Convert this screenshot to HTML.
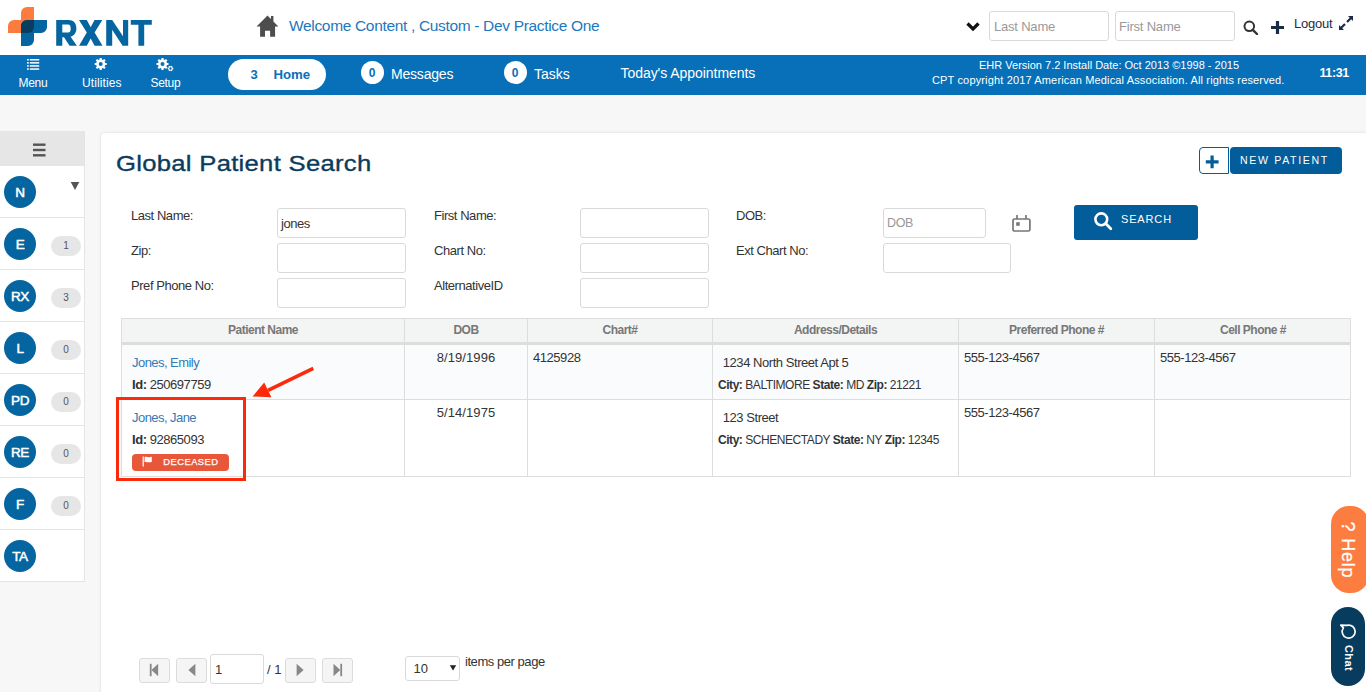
<!DOCTYPE html>
<html><head><meta charset="utf-8">
<style>
*{box-sizing:border-box;margin:0;padding:0}
html,body{width:1366px;height:692px;overflow:hidden;background:#f7f7f7;font-family:"Liberation Sans",sans-serif;color:#333}
div,span,svg{position:absolute}
.t{white-space:nowrap;line-height:1}
#top{left:0;top:0;width:1366px;height:55px;background:#fff}
#nav{left:0;top:55px;width:1366px;height:40px;background:#0770b8;color:#fff}
#side{left:0;top:131px;width:85px;height:451px;background:#fff;border-right:1px solid #e4e4e4;border-bottom:1px solid #e4e4e4}
#card{left:101px;top:133px;width:1265px;height:600px;background:#fff;border-radius:4px 0 0 0;box-shadow:0 0 3px rgba(0,0,0,.14)}
.inp{background:#fff;border:1px solid #d9d9d9;border-radius:3px}
.ph{color:#999;font-size:13px;letter-spacing:-0.2px}
.nl{font-size:12px;color:#fff;margin-top:-0.6px}
.cnt{background:#fff;border-radius:50%;width:23px;height:23px;color:#0770b8;font-weight:bold;font-size:12px;text-align:center;line-height:24.5px}
.nt{font-size:14px;color:#fff}
.av{width:32px;height:32px;border-radius:50%;background:#0565a1;color:#fff;font-size:13.5px;-webkit-text-stroke:0.5px #fff;text-align:center;line-height:33.6px;letter-spacing:-0.3px}
.bdg{width:30px;height:20px;border-radius:10px;background:#e6e6e6;color:#555;font-size:10px;text-align:center;line-height:20.5px}
.lb{font-size:13px;letter-spacing:-0.45px;color:#333}
.th{top:323.8px;font-size:12px;font-weight:bold;letter-spacing:-0.5px;color:#777;text-align:center}
.td{font-size:13px;letter-spacing:-0.45px;color:#333}
.lk{font-size:13px;letter-spacing:-0.55px;color:#337ab7}
.tc{font-size:12px;letter-spacing:-0.45px;color:#333}
.pb{top:658px;width:31px;height:25px;background:#f5f5f5;border:1px solid #dcdcdc;border-radius:3px}
</style></head><body>
<!-- TOP HEADER -->
<div id="top">
  <svg style="left:7.5px;top:7px" width="40" height="40" viewBox="0 0 40 40">
    <path fill="#fc7b3f" d="M19,0 H26 V20 A6,6 0 0 1 20,26 H0 V19 A6,6 0 0 1 6,13 H13 V6 A6,6 0 0 1 19,0 Z"/>
    <path fill="#0565a1" d="M19,13 H39 V20 A6,6 0 0 1 33,26 H26 V33 A6,6 0 0 1 20,39 H13 V19 A6,6 0 0 1 19,13 Z"/>
    <path fill="#083d5f" d="M19,13 H26 V20 A6,6 0 0 1 20,26 H13 V19 A6,6 0 0 1 19,13 Z"/>
  </svg>
  <svg style="left:52px;top:14px" width="104" height="36" viewBox="0 0 104 36"><g fill="#0565a1">
    <path fill-rule="evenodd" d="M4.2,5.9 H16.5 C21.5,5.9 24.4,9.2 24.4,14.5 C24.4,18.6 22.3,21.6 18.6,22.8 L24.9,31.8 H17.6 L12,23.3 H10.3 V31.8 H4.2 Z M10.3,10.6 V18.6 H16.2 C17.9,18.6 18.7,17.1 18.7,14.6 C18.7,12.1 17.9,10.6 16.2,10.6 Z"/>
    <path d="M27,5.9 H34.8 L38.7,13.2 L42.5,5.9 H50.3 L42.6,18.6 L50.5,31.8 H42.6 L38.7,24.5 L34.8,31.8 H27 L34.8,18.6 Z"/>
    <path d="M54.2,5.9 H60.2 L71,22.3 V5.9 H76.2 V31.8 H70.6 L60.2,15.8 V31.8 H54.2 Z"/>
    <path d="M78.8,5.9 H99.8 V10.7 H92.2 V31.8 H86.4 V10.7 H78.8 Z"/>
  </g></svg>
  <svg style="left:250px;top:10px" width="40" height="32" viewBox="0 0 40 32">
    <path fill="#4d4d4d" d="M6.5,16.4 L17.5,5.5 L21,9 V6 H23.4 V11.4 L28.4,16.4 H25.1 V26.7 H20.1 V20.8 H15 V26.7 H10.1 V16.4 Z"/>
  </svg>
  <div class="t" style="left:289px;top:18.2px;font-size:15.5px;letter-spacing:-0.33px;color:#1c78bd">Welcome Content , Custom - Dev Practice One</div>
  <svg style="left:966px;top:21px" width="14" height="11" viewBox="0 0 14 11">
    <path d="M1.5,2.5 L7,8 L12.5,2.5" fill="none" stroke="#111" stroke-width="3.2"/>
  </svg>
  <div class="inp" style="left:989px;top:11px;width:120px;height:30px"></div>
  <div class="t ph" style="left:994px;top:20px">Last Name</div>
  <div class="inp" style="left:1115px;top:11px;width:120px;height:30px"></div>
  <div class="t ph" style="left:1119px;top:20px">First Name</div>
  <svg style="left:1243px;top:20px" width="16" height="15" viewBox="0 0 16 15">
    <circle cx="6.3" cy="6.3" r="4.8" fill="none" stroke="#333" stroke-width="2"/>
    <path d="M9.8,9.8 L14,14" stroke="#333" stroke-width="2.4" stroke-linecap="round"/>
  </svg>
  <svg style="left:1270px;top:20px" width="15" height="15" viewBox="0 0 15 15">
    <path d="M7.5,1 V14 M1,7.5 H14" stroke="#1c2b45" stroke-width="3.2"/>
  </svg>
  <div class="t" style="left:1294px;top:16.8px;font-size:13px;letter-spacing:-0.25px;color:#1c2b45">Logout</div>
  <svg style="left:1338px;top:15px" width="16" height="16" viewBox="0 0 16 16">
    <path d="M9,7 L14,2 M7,9 L2,14" stroke="#1c2b45" stroke-width="2.2"/>
    <path d="M10,1 H15 V6 Z M1,10 V15 H6 Z" fill="#1c2b45"/>
  </svg>
</div>
<!-- NAV -->
<div id="nav">
  <svg style="left:27px;top:3.7px" width="13" height="12" viewBox="0 0 13 12">
    <g fill="#fff"><rect x="0" y="0" width="1.8" height="1.5"/><rect x="2.8" y="0" width="9.4" height="1.5"/>
    <rect x="0" y="3.1" width="1.8" height="1.5"/><rect x="2.8" y="3.1" width="9.4" height="1.5"/>
    <rect x="0" y="6.2" width="1.8" height="1.5"/><rect x="2.8" y="6.2" width="9.4" height="1.5"/>
    <rect x="0" y="9.3" width="1.8" height="1.5"/><rect x="2.8" y="9.3" width="9.4" height="1.5"/></g>
  </svg>
  <div class="t nl" style="left:18.5px;top:22.5px;letter-spacing:-0.3px">Menu</div>
  <svg style="left:94px;top:3px" width="14" height="13" viewBox="0 0 14 13" id="gear1"><path fill="#fff" fill-rule="evenodd" d="M11.17,4.91 L12.71,4.93 L12.71,7.07 L11.17,7.09 L10.63,8.39 L11.70,9.49 L10.19,11.00 L9.09,9.93 L7.79,10.47 L7.77,12.01 L5.63,12.01 L5.61,10.47 L4.31,9.93 L3.21,11.00 L1.70,9.49 L2.77,8.39 L2.23,7.09 L0.69,7.07 L0.69,4.93 L2.23,4.91 L2.77,3.61 L1.70,2.51 L3.21,1.00 L4.31,2.07 L5.61,1.53 L5.63,-0.01 L7.77,-0.01 L7.79,1.53 L9.09,2.07 L10.19,1.00 L11.70,2.51 L10.63,3.61 Z M8.70,6.00 A2.0,2.0 0 1 0 4.70,6.00 A2.0,2.0 0 1 0 8.70,6.00 Z"/></svg>
  <div class="t nl" style="left:82px;top:22.5px;letter-spacing:0.1px">Utilities</div>
  <svg style="left:156px;top:3px" width="18" height="15" viewBox="0 0 18 15" id="gear2"><path fill="#fff" fill-rule="evenodd" d="M10.97,4.91 L12.51,4.93 L12.51,7.07 L10.97,7.09 L10.43,8.39 L11.50,9.49 L9.99,11.00 L8.89,9.93 L7.59,10.47 L7.57,12.01 L5.43,12.01 L5.41,10.47 L4.11,9.93 L3.01,11.00 L1.50,9.49 L2.57,8.39 L2.03,7.09 L0.49,7.07 L0.49,4.93 L2.03,4.91 L2.57,3.61 L1.50,2.51 L3.01,1.00 L4.11,2.07 L5.41,1.53 L5.43,-0.01 L7.57,-0.01 L7.59,1.53 L8.89,2.07 L9.99,1.00 L11.50,2.51 L10.43,3.61 Z M8.50,6.00 A2.0,2.0 0 1 0 4.50,6.00 A2.0,2.0 0 1 0 8.50,6.00 Z M16.57,9.75 L17.30,9.75 L17.30,11.25 L16.57,11.25 L16.18,11.92 L16.55,12.55 L15.25,13.30 L14.89,12.67 L14.11,12.67 L13.75,13.30 L12.45,12.55 L12.82,11.92 L12.43,11.25 L11.70,11.25 L11.70,9.75 L12.43,9.75 L12.82,9.08 L12.45,8.45 L13.75,7.70 L14.11,8.33 L14.89,8.33 L15.25,7.70 L16.55,8.45 L16.18,9.08 Z M15.70,10.50 A1.2,1.2 0 1 0 13.30,10.50 A1.2,1.2 0 1 0 15.70,10.50 Z"/></svg>
  <div class="t nl" style="left:150.5px;top:22.5px;letter-spacing:-0.3px">Setup</div>

  <div style="left:228px;top:4px;width:98px;height:31px;background:#fff;border-radius:16px"></div>
  <div class="t" style="left:250.5px;top:12.5px;font-size:13px;font-weight:bold;color:#0770b8">3</div>
  <div class="t" style="left:273.5px;top:12.5px;font-size:13.2px;font-weight:bold;color:#0770b8">Home</div>

  <div class="cnt" style="left:360.5px;top:6px">0</div>
  <div class="t nt" style="left:391px;top:11.8px;letter-spacing:-0.2px">Messages</div>
  <div class="cnt" style="left:503.5px;top:6px">0</div>
  <div class="t nt" style="left:534px;top:12px">Tasks</div>
  <div class="t nt" style="left:620.5px;top:10.7px;letter-spacing:-0.05px">Today's Appointments</div>

  <div class="t" style="left:979px;top:4.5px;font-size:11px;width:260px;text-align:center">EHR Version 7.2 Install Date: Oct 2013 ©1998 - 2015</div>
  <div class="t" style="left:932px;top:19.5px;font-size:11px;letter-spacing:0.15px">CPT copyright 2017 American Medical Association. All rights reserved.</div>
  <div class="t" style="left:1319.5px;top:11.5px;font-size:12.5px;font-weight:bold;letter-spacing:-0.4px">11:31</div>
</div>
<div id="side">
  <div style="left:0;top:0;width:84px;height:35px;background:#e6e6e6"></div>
  <svg style="left:33px;top:12px" width="13" height="14" viewBox="0 0 13 14"><g fill="#555"><rect x="0" y="0.5" width="12.5" height="2.4"/><rect x="0" y="5.8" width="12.5" height="2.4"/><rect x="0" y="11.1" width="12.5" height="2.4"/></g></svg>
  <div class="av" style="left:4px;top:45px">N</div>
  <div style="left:0;top:86px;width:84px;height:1px;background:#e4e4e4"></div>
  <div class="av" style="left:4px;top:97px">E</div>
  <div class="bdg" style="left:51px;top:105px">1</div>
  <div style="left:0;top:138px;width:84px;height:1px;background:#e4e4e4"></div>
  <div class="av" style="left:4px;top:149px">RX</div>
  <div class="bdg" style="left:51px;top:157px">3</div>
  <div style="left:0;top:190px;width:84px;height:1px;background:#e4e4e4"></div>
  <div class="av" style="left:4px;top:201px">L</div>
  <div class="bdg" style="left:51px;top:209px">0</div>
  <div style="left:0;top:242px;width:84px;height:1px;background:#e4e4e4"></div>
  <div class="av" style="left:4px;top:253px">PD</div>
  <div class="bdg" style="left:51px;top:261px">0</div>
  <div style="left:0;top:294px;width:84px;height:1px;background:#e4e4e4"></div>
  <div class="av" style="left:4px;top:305px">RE</div>
  <div class="bdg" style="left:51px;top:313px">0</div>
  <div style="left:0;top:346px;width:84px;height:1px;background:#e4e4e4"></div>
  <div class="av" style="left:4px;top:357px">F</div>
  <div class="bdg" style="left:51px;top:365px">0</div>
  <div style="left:0;top:398px;width:84px;height:1px;background:#e4e4e4"></div>
  <div class="av" style="left:4px;top:409px">TA</div>
  <svg style="left:70px;top:50px" width="10" height="10" viewBox="0 0 10 10"><path d="M0.7,1 H9.3 L5,9 Z" fill="#555"/></svg>
</div>
<div id="card"></div>
<div class="t" style="left:116px;top:152.6px;font-size:22px;-webkit-text-stroke:0.35px #0b3c5d;letter-spacing:0.25px;color:#0b3c5d;transform-origin:0 0;transform:scaleX(1.165)">Global Patient Search</div>
<div style="left:1199px;top:147px;width:30px;height:27px;border:1px solid #045d9b;border-radius:4px 0 0 4px;background:#fff"></div>
<svg style="left:1205px;top:154.5px" width="14" height="14" viewBox="0 0 14 14"><path d="M7.1,0.5 V13.3 M0.8,6.8 H13.6" stroke="#045d9b" stroke-width="3.2"/></svg>
<div style="left:1229.8px;top:147px;width:112.2px;height:27px;background:#045d9b;border-radius:4px"></div>
<div class="t" style="left:1240px;top:154.9px;font-size:10.6px;letter-spacing:1.65px;color:#fff">NEW PATIENT</div>

<div class="t lb" style="left:131px;top:209.2px">Last Name:</div>
<div class="t lb" style="left:131px;top:244px">Zip:</div>
<div class="t lb" style="left:131px;top:279px">Pref Phone No:</div>
<div class="t lb" style="left:434px;top:209.2px">First Name:</div>
<div class="t lb" style="left:434px;top:244px">Chart No:</div>
<div class="t lb" style="left:434px;top:279px">AlternativeID</div>
<div class="t lb" style="left:736px;top:209.2px">DOB:</div>
<div class="t lb" style="left:736px;top:244px">Ext Chart No:</div>
<div class="inp" style="left:277px;top:208px;width:129px;height:30px"></div>
<div class="inp" style="left:277px;top:243px;width:129px;height:30px"></div>
<div class="inp" style="left:277px;top:278px;width:129px;height:30px"></div>
<div class="inp" style="left:580px;top:208px;width:129px;height:30px"></div>
<div class="inp" style="left:580px;top:243px;width:129px;height:30px"></div>
<div class="inp" style="left:580px;top:278px;width:129px;height:30px"></div>
<div class="inp" style="left:883px;top:208px;width:103px;height:30px"></div>
<div class="inp" style="left:883px;top:243px;width:128px;height:30px"></div>
<div class="t lb" style="left:281px;top:217.1px">jones</div>
<div class="t" style="left:887px;top:216.6px;font-size:12.5px;letter-spacing:-0.35px;color:#999">DOB</div>
<svg style="left:1011px;top:214px" width="20" height="19" viewBox="0 0 20 19">
  <rect x="2" y="5" width="16.9" height="12" rx="1.6" fill="none" stroke="#777" stroke-width="1.7"/>
  <path d="M6,1 V5 M15,1 V5" stroke="#777" stroke-width="1.7"/>
  <rect x="5.2" y="8.2" width="3.5" height="3.6" fill="#777"/>
</svg>
<div style="left:1074px;top:205px;width:124px;height:35px;background:#045d9b;border-radius:3px"></div>
<svg style="left:1092px;top:210px" width="22" height="22" viewBox="0 0 22 22">
  <circle cx="9.3" cy="9.3" r="5.9" fill="none" stroke="#fff" stroke-width="2.6"/>
  <path d="M13.6,13.6 L18.8,18.8" stroke="#fff" stroke-width="2.8" stroke-linecap="round"/>
</svg>
<div class="t" style="left:1121px;top:213.8px;font-size:11px;letter-spacing:0.85px;color:#fff">SEARCH</div>

<!-- TABLE -->
<div style="left:121px;top:318px;width:1230px;height:159px;border:1px solid #ddd;background:#fff"></div>
<div style="left:122px;top:319px;width:1228px;height:23px;background:#f3f4f4"></div>
<div style="left:122px;top:342px;width:1228px;height:3px;background:#ddd"></div>
<div style="left:122px;top:345px;width:1228px;height:54px;background:#fafbfd"></div>
<div style="left:122px;top:399px;width:1228px;height:1px;background:#ddd"></div>
<div style="left:404px;top:318px;width:1px;height:158px;background:#ddd"></div>
<div style="left:527px;top:318px;width:1px;height:158px;background:#ddd"></div>
<div style="left:712px;top:318px;width:1px;height:158px;background:#ddd"></div>
<div style="left:958px;top:318px;width:1px;height:158px;background:#ddd"></div>
<div style="left:1154px;top:318px;width:1px;height:158px;background:#ddd"></div>
<div style="left:122px;top:342px;width:1228px;height:3px;background:#ddd"></div>
<div class="t th" style="left:122px;width:282px">Patient Name</div>
<div class="t th" style="left:405px;width:122px">DOB</div>
<div class="t th" style="left:528px;width:184px">Chart#</div>
<div class="t th" style="left:713px;width:245px">Address/Details</div>
<div class="t th" style="left:959px;width:195px">Preferred Phone #</div>
<div class="t th" style="left:1155px;width:196px">Cell Phone #</div>

<div class="t lk" style="left:132px;top:356.2px">Jones, Emily</div>
<div class="t td" style="left:132px;top:377.8px"><b>Id:</b> 250697759</div>
<div class="t td" style="left:405px;top:351.3px;width:122px;text-align:center;letter-spacing:0.1px">8/19/1996</div>
<div class="t td" style="left:533px;top:351.3px">4125928</div>
<div class="t td" style="left:722.8px;top:355.8px">1234 North Street Apt 5</div>
<div class="t tc" style="left:718px;top:378.9px"><b>City:</b> BALTIMORE <b>State:</b> MD <b>Zip:</b> 21221</div>
<div class="t td" style="left:964px;top:350.8px">555-123-4567</div>
<div class="t td" style="left:1160px;top:350.8px">555-123-4567</div>

<div class="t lk" style="left:132px;top:410.8px">Jones, Jane</div>
<div class="t td" style="left:132px;top:432.8px"><b>Id:</b> 92865093</div>
<div style="left:132px;top:454px;width:97px;height:17px;background:#e9573b;border-radius:4px"></div>
<svg style="left:142px;top:455.5px" width="11" height="11" viewBox="0 0 11 11"><path d="M1.2,0.5 V10.5" stroke="#fff" stroke-width="1.2"/><path d="M2.6,1 C4.5,0.2 6,1.8 9.8,0.8 V6 C6,7 4.5,5.4 2.6,6.2 Z" fill="#fff"/></svg>
<div class="t" style="left:163.3px;top:457.3px;font-size:9.4px;-webkit-text-stroke:0.25px #fff;letter-spacing:0.45px;color:#fff">DECEASED</div>
<div class="t td" style="left:405px;top:406.4px;width:122px;text-align:center;letter-spacing:0.1px">5/14/1975</div>
<div class="t td" style="left:722.8px;top:410.9px">123 Street</div>
<div class="t tc" style="left:718px;top:433.7px"><b>City:</b> SCHENECTADY <b>State:</b> NY <b>Zip:</b> 12345</div>
<div class="t td" style="left:964px;top:405.8px">555-123-4567</div>

<!-- annotation -->
<div style="left:116px;top:396.5px;width:130px;height:84.5px;border:3.5px solid #fc2a0a"></div>
<svg style="left:240px;top:360px" width="90" height="45" viewBox="0 0 90 45">
  <path d="M73.3,8.4 L28,30.4" stroke="#fc2a0a" stroke-width="3.4"/>
  <path d="M12.6,36.5 L24.2,22.5 L31.4,37.3 Z" fill="#fc2a0a"/>
</svg>

<!-- PAGINATION -->
<div class="pb" style="left:139px"></div>
<div class="pb" style="left:176px"></div>
<div class="pb" style="left:285px"></div>
<div class="pb" style="left:322px"></div>
<svg style="left:139px;top:658px" width="214" height="25" viewBox="0 0 214 25">
  <g fill="#888">
  <rect x="10.8" y="5.8" width="1.8" height="12.4"/><path d="M19.2,5.8 V18.2 L12.4,12 Z"/>
  <path d="M56.4,5.8 V18.2 L49.4,12 Z"/>
  <path d="M157.6,5.8 V18.2 L164.6,12 Z"/>
  <path d="M194.5,5.8 V18.2 L201.3,12 Z"/><rect x="201.3" y="5.8" width="1.8" height="12.4"/>
  </g>
</svg>
<div class="inp" style="left:210px;top:654px;width:54px;height:30px"></div>
<div class="t td" style="left:215px;top:663px">1</div>
<div class="t td" style="left:267px;top:663px;letter-spacing:0">/ 1</div>
<div class="inp" style="left:405px;top:656px;width:55px;height:25px"></div>
<div class="t td" style="left:413.5px;top:662.1px;letter-spacing:-0.1px">10</div>
<svg style="left:449px;top:664px" width="8" height="8" viewBox="0 0 8 8"><path d="M0.8,1.2 H7.2 L4,6.5 Z" fill="#222"/></svg>
<div class="t td" style="left:465px;top:654.8px">items per page</div>

<!-- HELP / CHAT -->
<div style="left:1331px;top:506px;width:38px;height:86.5px;background:#fd7c3f;border-radius:18px"></div>
<div class="t" style="left:1347.8px;top:549.5px;font-size:18px;letter-spacing:0.8px;-webkit-text-stroke:0.25px #fff;color:#fff;transform:translate(-50%,-50%) rotate(90deg)">? Help</div>
<div style="left:1331px;top:607px;width:34px;height:79px;background:#083c5e;border-radius:17px"></div>
<svg style="left:1339px;top:623px" width="18" height="17" viewBox="0 0 18 17"><path d="M8.02,2.32 A6.5,6.5 0 1 1 4.38,4.87 L1.8,2.1 Z" fill="none" stroke="#fff" stroke-width="1.7" stroke-linejoin="round"/></svg>
<div class="t" style="left:1347.6px;top:657.8px;font-size:11px;font-weight:bold;letter-spacing:0.4px;color:#fff;transform:translate(-50%,-50%) rotate(90deg)">Chat</div>

</body></html>
